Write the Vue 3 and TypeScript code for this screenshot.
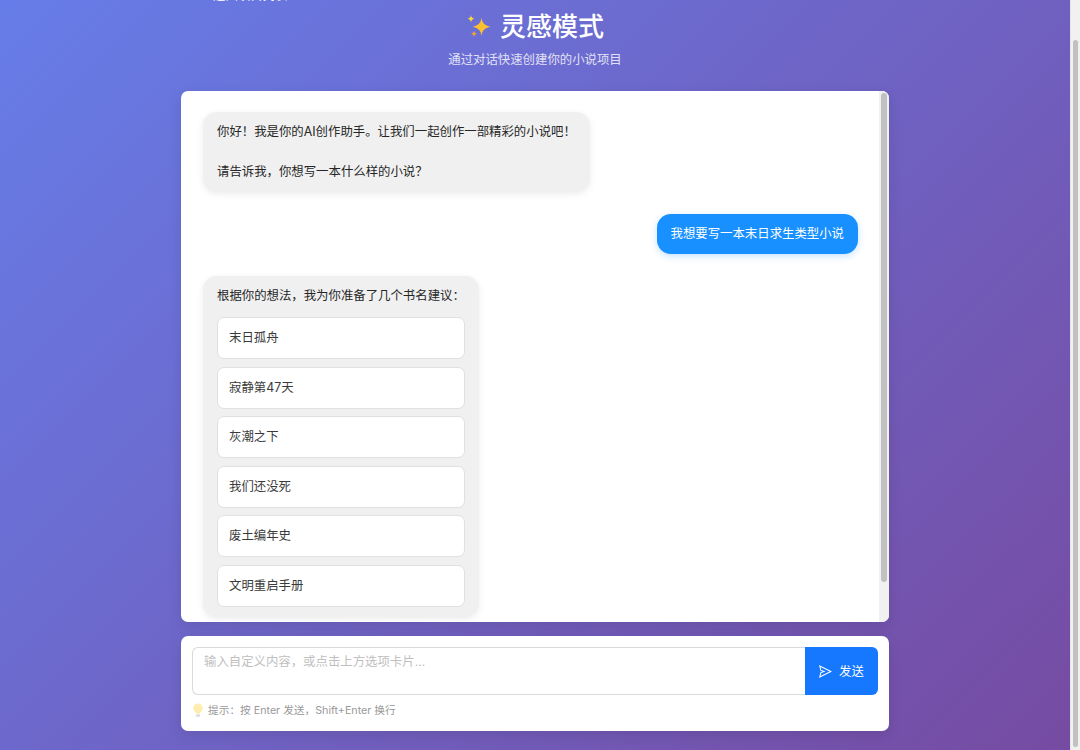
<template>
  <div class="page">
    <div ref="viewportEl" class="viewport">
      <div class="inspiration">
        <div class="container">
          <button class="back-btn" type="button">
            <svg class="back-icon" viewBox="64 64 896 896" fill="currentColor">
              <path d="M872 474H286.9l350.2-304c5.6-4.9 2.2-14-5.2-14h-88.5c-3.9 0-7.6 1.4-10.5 3.9L155 487.8a31.96 31.96 0 000 48.3L535.1 866c1.5 1.3 3.3 2 5.2 2h91.5c7.4 0 10.8-9.2 5.2-14L286.9 550H872c4.4 0 8-3.6 8-8v-60c0-4.4-3.6-8-8-8z" />
            </svg>
            <span>返回项目列表</span>
          </button>

          <header class="header">
            <h1 class="title">
              <svg class="sparkles" viewBox="0 0 26 24">
                <path d="M15.5 2.5c.7 5.6 3.1 8 9 9.2-5.900 1.200-8.300 3.600-9 9.300-.7-5.700-3.100-8.100-9-9.300 5.900-1.200 8.300-3.600 9-9.200z" fill="#fbc02d" />
                <path d="M5 0c.3 2.300 1.200 3.200 3.400 3.700C6.200 4.200 5.300 5.100 5 7.400 4.700 5.100 3.800 4.200 1.600 3.700 3.800 3.200 4.700 2.300 5 0z" fill="#fdd835" />
                <path d="M8 15.500c.3 2 1 2.800 3 3.200-2 .4-2.700 1.200-3 3.300-.3-2.100-1-2.900-3-3.300 2-.4 2.700-1.200 3-3.200z" fill="#f9a825" />
              </svg>
              <span>灵感模式</span>
            </h1>
            <p class="subtitle">通过对话快速创建你的小说项目</p>
          </header>

          <section class="chat">
            <div class="chat-list">
              <div class="message">
                <div class="bubble bubble-ai">{{ greeting }}</div>
              </div>
              <div class="message message-user">
                <div class="bubble bubble-user">我想要写一本末日求生类型小说</div>
              </div>
              <div class="message">
                <div class="bubble bubble-ai">
                  <div>根据你的想法，我为你准备了几个书名建议：</div>
                  <div class="options">
                    <div v-for="name in titles" :key="name" class="option">{{ name }}</div>
                  </div>
                </div>
              </div>
            </div>
            <div class="chat-bar">
              <div class="chat-thumb"></div>
            </div>
          </section>

          <section class="composer">
            <div class="input-row">
              <textarea class="input" placeholder="输入自定义内容，或点击上方选项卡片..."></textarea>
              <button class="send-btn" type="button">
                <svg class="send-icon" viewBox="64 64 896 896" fill="currentColor">
                  <path d="M931.4 498.9L94.9 79.5c-3.4-1.7-7.3-2.1-11-1.2a15.99 15.99 0 00-11.7 19.3l86.2 352.2c1.3 5.3 5.2 9.6 10.4 11.3l147.7 50.7-147.6 50.7c-5.2 1.8-9.1 6-10.3 11.3L72.2 926.5c-.9 3.7-.5 7.6 1.2 10.9 3.9 7.9 13.5 11.1 21.5 7.2l836.5-417c3.1-1.5 5.6-4.1 7.2-7.1 3.9-8 .7-17.6-7.2-21.6zM170.8 826.3l50.3-205.6 295.2-101.3c2.3-.8 4.2-2.6 5-5 1.4-4.2-.8-8.7-5-10.200L221.1 403 171 198.200l628 314.900-628.200 313.200z" />
                </svg>
                <span>发送</span>
              </button>
            </div>
            <div class="hint">
              <svg class="bulb" viewBox="0 0 12 16">
                <path d="M6 .5a5 5 0 0 0-3 9c.6.500.9 1.100 1 2h4c.1-.9.400-1.500 1-2a5 5 0 0 0-3-9z" fill="#fdeeb0" />
                <path d="M4 12.200h4v1.500a1 1 0 0 1-1 1H5a1 1 0 0 1-1-1z" fill="#d6d6d6" />
              </svg>
              <span>提示：按 Enter 发送，Shift+Enter 换行</span>
            </div>
          </section>
        </div>
      </div>
    </div>
    <div class="page-bar">
      <div class="page-thumb"></div>
    </div>
  </div>
</template>

<script setup lang="ts">
import { ref, onMounted } from 'vue'

const greeting = '你好！我是你的AI创作助手。让我们一起创作一部精彩的小说吧！\n\n请告诉我，你想写一本什么样的小说？'
const titles = ['末日孤舟', '寂静第47天', '灰潮之下', '我们还没死', '废土编年史', '文明重启手册']

const viewportEl = ref<HTMLElement | null>(null)

onMounted(() => {
  // The reference is photographed slightly scrolled down
  if (viewportEl.value) viewportEl.value.scrollTop = 42
})
</script>

<style scoped>
.page {
  display: flex;
  height: 100vh;
  overflow: hidden;
  font-family: Inter, 'Noto Sans CJK SC', sans-serif;
  font-size: 12.4px;
}

.viewport {
  flex: 1;
  min-width: 0;
  overflow: hidden;
}

.page-bar {
  flex: 0 0 10px;
  box-sizing: border-box;
  padding: 40px 2px 3px;
  background: #f1f1f1;
  border-left: 1px solid #e6e6e6;
}

.page-thumb {
  height: 100%;
  background: #c1c1c1;
  border-radius: 3px;
}

.inspiration {
  min-height: 792px;
  box-sizing: border-box;
  padding: 30px 0 19px;
  background: linear-gradient(135deg, #667eea 0%, #764ba2 100%);
}

.container {
  width: 708px;
  margin: 0 auto;
}

.back-btn {
  display: flex;
  align-items: center;
  gap: 7px;
  height: 14px;
  padding: 0 0 0 14px;
  border: none;
  background: none;
  color: #fff;
  font: inherit;
}

.back-icon {
  width: 11px;
  height: 11px;
}

.header {
  margin-top: 8px;
  text-align: center;
  color: #fff;
}

.title {
  display: flex;
  align-items: center;
  justify-content: center;
  gap: 8px;
  margin: 0;
  font-size: 26px;
  font-weight: 500;
  line-height: 34px;
}

.sparkles {
  width: 26px;
  height: 24px;
}

.subtitle {
  margin: 6px 0 0;
  line-height: 20px;
  opacity: 0.8;
}

.chat {
  display: flex;
  height: 531px;
  margin-top: 21px;
  overflow: hidden;
  background: #fff;
  border-radius: 7px;
  box-shadow: 0 4px 14px rgba(0, 0, 0, 0.1);
}

.chat-list {
  flex: 1;
  min-width: 0;
  box-sizing: border-box;
  padding: 21px 21px 0 22px;
  overflow: hidden;
  display: flex;
  flex-direction: column;
  gap: 22px;
}

.chat-bar {
  flex: 0 0 10px;
  box-sizing: border-box;
  padding: 2px 2px 0;
  background: #f1f1f1;
}

.chat-thumb {
  height: 489px;
  background: #c1c1c1;
  border-radius: 3px;
}

.message {
  display: flex;
  flex-shrink: 0;
}

.message-user {
  justify-content: flex-end;
}

.bubble {
  box-sizing: border-box;
  padding: 10px 14px;
  border-radius: 14px;
  line-height: 20px;
  white-space: pre-wrap;
}

.bubble-ai {
  background: #f0f0f0;
  color: #262626;
  box-shadow: 0 2px 7px rgba(0, 0, 0, 0.08);
}

.bubble-user {
  background: #1890ff;
  color: #fff;
  box-shadow: 0 2px 7px rgba(24, 144, 255, 0.25);
}

.options {
  display: flex;
  flex-direction: column;
  gap: 7.6px;
  margin-top: 11px;
}

.option {
  height: 42px;
  box-sizing: border-box;
  display: flex;
  align-items: center;
  padding: 0 11px;
  background: #fff;
  border: 1px solid #e0e0e0;
  border-radius: 7px;
  color: #3a3a3a;
}

.composer {
  margin-top: 14px;
  padding: 11px 11px 12px;
  background: #fff;
  border-radius: 7px;
  box-shadow: 0 4px 14px rgba(0, 0, 0, 0.1);
}

.input-row {
  display: flex;
  height: 48px;
}

.input {
  flex: 1;
  box-sizing: border-box;
  padding: 4px 11px;
  border: 1px solid #d9d9d9;
  border-right: none;
  border-radius: 6px 0 0 6px;
  outline: none;
  resize: none;
  font: inherit;
  line-height: 20px;
  color: #333;
}

.input::placeholder {
  color: #bfbfbf;
}

.send-btn {
  width: 73px;
  display: flex;
  align-items: center;
  justify-content: center;
  gap: 7px;
  border: none;
  border-radius: 0 6px 6px 0;
  background: #1677ff;
  color: #fff;
  font: inherit;
}

.send-icon {
  width: 13px;
  height: 13px;
}

.hint {
  display: flex;
  align-items: center;
  gap: 4px;
  margin-top: 7px;
  font-size: 10.7px;
  line-height: 17px;
  color: #999;
}

.bulb {
  width: 12px;
  height: 15px;
}
</style>
